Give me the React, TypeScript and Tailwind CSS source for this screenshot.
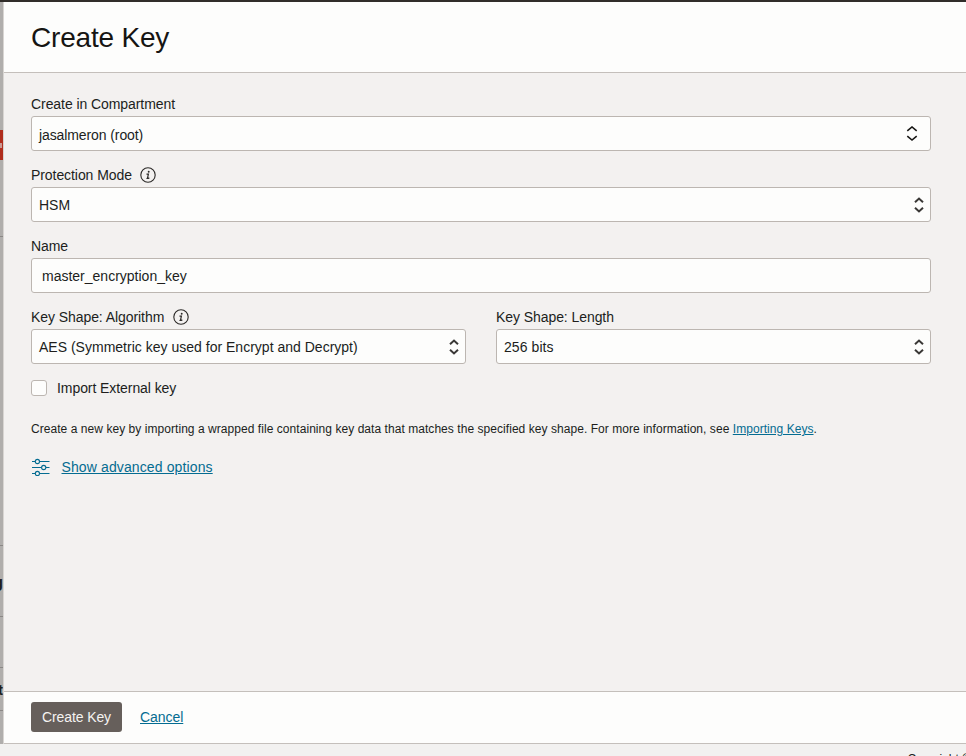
import type { ReactNode } from "react";

function InfoIcon() {
  return (
    <svg className="ml-[8.500px] size-4 text-[#2b2927]" viewBox="0 0 16 16" fill="none">
      <circle cx="8" cy="8" r="7.2" stroke="currentColor" strokeWidth="1.1" />
      <circle cx="8.7" cy="4.8" r="0.95" fill="currentColor" />
      <path d="M6.500 7.100H8.400L7.500 11.100M6.500 11.200Q7.900 11.900 9.300 10.700" stroke="currentColor" strokeWidth="1.2" />
    </svg>
  );
}

function Chevrons({ wide = false }: { wide?: boolean }) {
  return wide ? (
    <svg className="mr-[12.500px] h-4 w-3 shrink-0" viewBox="0 0 12 16" fill="none" stroke="#161513" strokeWidth="1.6">
      <path d="M1.300 4.800 6 1l4.700 3.800M1.300 10.200 6 14l4.700-3.800" />
    </svg>
  ) : (
    <svg className="mr-[5px] h-4 w-3 shrink-0" viewBox="0 0 12 16" fill="none" stroke="#3a3836" strokeWidth="2">
      <path d="M2 5.200 6 1.500l4 3.700M2 10.700 6 14.400l4-3.700" />
    </svg>
  );
}

function Field({ label, info, children }: { label: string; info?: boolean; children: ReactNode }) {
  return (
    <div className="min-w-0 flex-1 pt-3">
      <div className="flex h-6 items-center">
        <span className="tracking-[-0.07px] whitespace-nowrap">{label}</span>
        {info && <InfoIcon />}
      </div>
      <div className="flex h-[35px] items-center justify-between rounded-[3px] border border-[#bcb6b1] bg-[#fdfdfc] pl-[7px]">
        {children}
      </div>
    </div>
  );
}

export default function App() {
  return (
    <div className="flex h-[756px] w-[966px] flex-col overflow-hidden bg-[#f3f1f0] font-['Liberation_Sans',Arial,sans-serif] text-[14px] text-[#201e1c]">
      <div className="h-[2px] shrink-0 bg-[#312d2a]" />
      <div className="flex h-[742px] shrink-0">
        <aside className="flex w-[3px] shrink-0 flex-col overflow-hidden bg-[#b0aeac]">
          <div className="mt-32 flex h-[30px] shrink-0 items-center bg-[#b02d1d]">
            <div className="h-[5px] w-[2px] bg-[#cb9892]" />
          </div>
          <div className="mt-[76px] h-px shrink-0 bg-[#8b8886]" />
          <div className="mt-[308px] h-px shrink-0 bg-[#8b8886]" />
          <div className="mt-[28px] flex h-[18px] shrink-0 justify-end text-[16px] leading-[18px] font-bold">g</div>
          <div className="mt-[24px] h-px shrink-0 bg-[#8b8886]" />
          <div className="mt-[50px] h-px shrink-0 bg-[#8b8886]" />
          <div className="mt-[13px] flex h-[18px] shrink-0 justify-end text-[14px] leading-[18px] font-bold">t</div>
          <div className="mt-[11px] h-px shrink-0 bg-[#8b8886]" />
        </aside>
        <main className="flex min-w-0 flex-1 flex-col border-l border-[#d8d5d2]">
          <header className="flex h-[71px] shrink-0 items-center border-b border-[#c4bfbb] bg-[#fdfdfc] pt-[2px] pl-[27px]">
            <h1 className="text-[28px] leading-8 tracking-[-0.2px] text-[#161513]">Create Key</h1>
          </header>
          <section className="flex-1 pt-[7px] pr-[35px] pl-[27px]">
            <Field label="Create in Compartment">
              <span className="pt-[3px] tracking-[-0.1px]">jasalmeron (root)</span>
              <Chevrons wide />
            </Field>
            <Field label="Protection Mode" info>
              <span className="pt-[2px]">HSM</span>
              <Chevrons />
            </Field>
            <Field label="Name">
              <span className="pt-[2px] pl-[3px]">master_encryption_key</span>
            </Field>
            <div className="flex gap-[30px]">
              <Field label="Key Shape: Algorithm" info>
                <span className="pt-[2px] tracking-[0.01px]">AES (Symmetric key used for Encrypt and Decrypt)</span>
                <Chevrons />
              </Field>
              <Field label="Key Shape: Length">
                <span className="pt-[2px] tracking-[0.08px]">256 bits</span>
                <Chevrons />
              </Field>
            </div>
            <div className="mt-4 flex h-4 items-center">
              <div className="size-4 rounded-[3px] border border-[#bcb6b1] bg-[#fdfdfc]" />
              <span className="ml-[10px] tracking-[-0.07px]">Import External key</span>
            </div>
            <p className="mt-[25px] h-4 text-[12px] leading-4 tracking-[0.052px] whitespace-nowrap">
              Create a new key by importing a wrapped file containing key data that matches the specified key shape. For more information, see <a className="text-[#046c91] underline">Importing Keys</a>.
            </p>
            <div className="mt-[20px] flex h-5 items-center text-[#046c91]">
              <svg className="h-[18px] w-5" viewBox="0 0 20 18" fill="none" stroke="currentColor" strokeWidth="1.1">
                <path d="M1 3.500h3.100M8.700 3.500H18.500M1 9.500h9.300M15 9.500h3.500M1 15.500h3.100M8.700 15.500H18.500" />
                <circle cx="6.400" cy="3.500" r="2.100" />
                <circle cx="12.700" cy="9.500" r="2.100" />
                <circle cx="6.400" cy="15.500" r="2.100" />
              </svg>
              <a className="ml-[10.500px] tracking-[0.12px] underline">Show advanced options</a>
            </div>
          </section>
          <footer className="flex h-[53px] shrink-0 items-center border-t border-b border-[#c4bfbb] bg-[#fdfdfc] pb-px pl-[27px]">
            <button className="h-[30px] w-[91px] rounded-[3px] bg-[#665f5b] pt-px tracking-[-0.1px] text-[#f5f3f1]">Create Key</button>
            <a className="mt-px ml-[18px] tracking-[-0.05px] text-[#046c91] underline">Cancel</a>
          </footer>
        </main>
      </div>
      <div className="flex h-3 shrink-0 justify-end overflow-hidden bg-[#f2f1f0]">
        <span className="-mr-[5px] mt-[8px] text-[12px] leading-[14px] whitespace-nowrap">Copyright ©</span>
      </div>
    </div>
  );
}
